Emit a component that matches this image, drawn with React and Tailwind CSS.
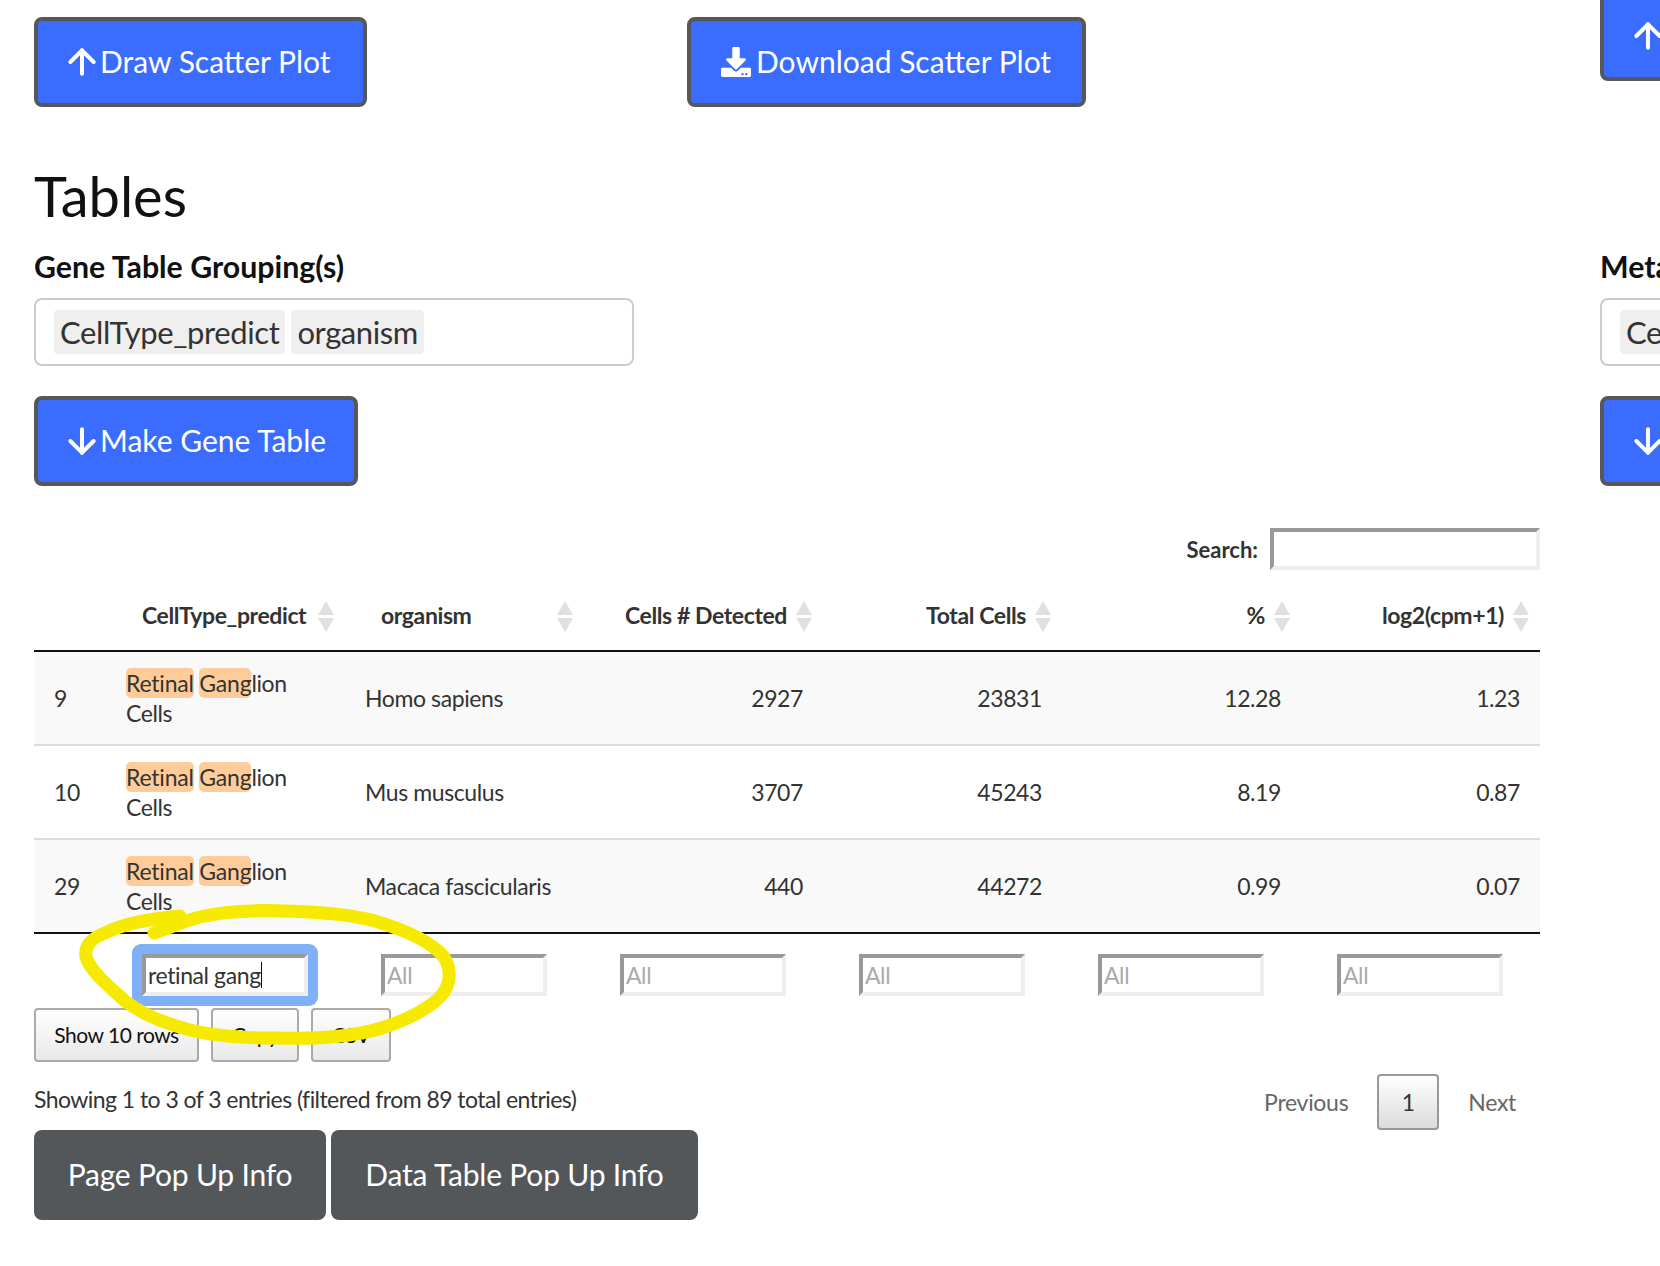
import React from "react";
import { FaDownload } from "react-icons/fa";
import { ArrowUp, ArrowDown } from "lucide-react";

const font = "font-['Lato','Liberation_Sans',sans-serif]";

function BlueBtn({ icon, children, className = "" }) {
  return (
    <button className={`flex items-center h-[90px] pl-[30px] pr-[30px] bg-[#3a6cff] border-4 border-[#555759] rounded-[8px] text-white text-[30px] leading-none whitespace-nowrap shrink-0 ${className}`}>
      {icon}
      <span className="ml-[4px] -mt-[2px]">{children}</span>
    </button>
  );
}

const Up = <ArrowUp size={40} strokeWidth={2.4} className="-mx-[6px] shrink-0" />;
const Down = <ArrowDown size={40} strokeWidth={2.4} className="-mx-[6px] shrink-0" />;

function Chip({ children }) {
  return <span className="h-[44px] px-[6px] flex items-center bg-[#efefef] rounded-[4px] text-[31px] tracking-[-0.4px] text-[#333]">{children}</span>;
}

function SelectBox({ chips, className = "" }) {
  return (
    <div className={`h-[68px] border-2 border-[#ccc] rounded-[8px] flex items-center gap-[6px] pl-[18px] ${className}`}>
      {chips.map((c) => <Chip key={c}>{c}</Chip>)}
    </div>
  );
}

function Sort() {
  return (
    <svg width="18" height="32" viewBox="0 0 18 32" className="absolute right-[10px] top-[31px]">
      <path d="M9 0 L17 14 H1 Z M1 17 H17 L9 31 Z" fill="#e0e0e0" />
    </svg>
  );
}

function Inset({ children, className = "" }) {
  return (
    <div className={`h-[42px] w-[166px] border-4 border-t-[#999] border-l-[#999] border-b-[#eee] border-r-[#eee] bg-white flex items-center text-[23px] leading-none pl-[1px] ${className}`}>
      {children}
    </div>
  );
}

const Mark = ({ children }) => <mark className="bg-[#ffcc99] text-[#333] rounded-[5px] py-[1px] tracking-[-0.2px]">{children}</mark>;

const rows = [
  ["9", "Homo sapiens", "2927", "23831", "12.28", "1.23", "bg-[#f9f9f9]"],
  ["10", "Mus musculus", "3707", "45243", "8.19", "0.87", "bg-white"],
  ["29", "Macaca fascicularis", "440", "44272", "0.99", "0.07", "bg-[#f9f9f9]"],
];

const heads = ["Cells # Detected", "Total Cells", "%", "log2(cpm+1)"];

function Table() {
  return (
    <table className="w-[1506px] table-fixed border-collapse text-[23px] tracking-[-0.4px] text-[#333]">
      <colgroup>
        <col className="w-[72px]" />
        <col className="w-[239px]" />
        <col className="w-[239px]" />
        <col className="w-[239px]" />
        <col className="w-[239px]" />
        <col className="w-[239px]" />
        <col className="w-[239px]" />
      </colgroup>
      <thead>
        <tr className="h-[81px] border-b-2 border-[#111]">
          <th />
          <th className="relative text-left pl-[36px] pt-[10px] font-bold whitespace-nowrap"><span>CellType_predict</span><Sort /></th>
          <th className="relative text-left pl-[36px] pt-[10px] font-bold"><span>organism</span><Sort /></th>
          {heads.map((h) => (
            <th key={h} className="relative text-right pr-[36px] pt-[10px] font-bold whitespace-nowrap"><span>{h}</span><Sort /></th>
          ))}
        </tr>
      </thead>
      <tbody>
        {rows.map((r, i) => (
          <tr key={r[0]} className={`h-[94px] ${r[6]} ${i < 2 ? "border-b-2 border-[#ddd]" : "border-b-2 border-[#111]"}`}>
            <td className="pl-[20px]">{r[0]}</td>
            <td className="pl-[20px] leading-[30px]"><Mark>Retinal</Mark> <Mark>Gang</Mark>lion<br />Cells</td>
            <td className="pl-[20px]">{r[1]}</td>
            <td className="pr-[20px] text-right">{r[2]}</td>
            <td className="pr-[20px] text-right">{r[3]}</td>
            <td className="pr-[20px] text-right">{r[4]}</td>
            <td className="pr-[20px] text-right">{r[5]}</td>
          </tr>
        ))}
        <tr className="h-[74px]">
          <td />
          <td className="pl-[36px] pt-[20px] pb-[12px] align-top">
            <div className="w-[186px] -m-[10px] p-[10px] bg-[#7fb0f8] rounded-[9px]">
              <Inset className="text-[#333]">
                <span className="pl-[1px]">retinal gang</span><span className="inline-block w-[1px] h-[26px] bg-[#111]" />
              </Inset>
            </div>
          </td>
          {[0, 1, 2, 3, 4].map((k) => (
            <td key={k} className="pl-[36px] pt-[20px] pb-[12px] align-top"><Inset className="text-[#aaa]"><span className="pl-[1px]">All</span></Inset></td>
          ))}
        </tr>
      </tbody>
    </table>
  );
}

function GrayBtn({ children, className = "" }) {
  return (
    <button className={`h-[54px] border-2 border-[#aaa] rounded-[4px] bg-linear-to-b from-white to-[#e9e9e9] text-[21px] tracking-[-0.5px] text-[#111] flex items-center justify-center ${className}`}>
      {children}
    </button>
  );
}

function Scribble() {
  return (
    <svg width="1660" height="1266" viewBox="0 0 1660 1266" fill="none" className="absolute left-0 top-0 pointer-events-none">
      <path
        d="M154 933 C168 929 183 921 200 917 C225 911 260 910 285 911 C320 912 350 914 375 921 C405 930 432 942 444 957 C452 970 451 985 440 997 C427 1010 405 1020 385 1027 C355 1037 310 1039 275 1038 C240 1038 210 1035 190 1030 C160 1022 140 1013 125 1001 C105 983 90 970 86 957 C84 945 92 938 105 933 C125 923 150 919 180 916"
        stroke="#f5ea00" strokeWidth="13" strokeLinecap="round" strokeLinejoin="round"
      />
    </svg>
  );
}

export default function App() {
  return (
    <div className={`relative w-[1660px] h-[1266px] overflow-hidden bg-white ${font}`}>
      <div className="absolute left-[1600px] top-[-9px]">
        <BlueBtn icon={Up}>Draw Scatter Plot</BlueBtn>
      </div>
      <div className="w-[1566px] pl-[34px] pt-[17px]">
        <div className="flex">
          <div className="w-[653px]"><BlueBtn icon={Up} className="w-[333px]">Draw Scatter Plot</BlueBtn></div>
          <BlueBtn icon={<FaDownload size={30} className="mr-[1px] shrink-0" />} className="w-[399px]">Download Scatter Plot</BlueBtn>
        </div>
        <h2 className="text-[56px] leading-none font-normal text-[#111] mt-[61px]">Tables</h2>
        <div className="flex">
          <div className="w-[1566px] shrink-0">
            <div className="text-[30.3px] font-bold text-[#111] leading-[36px] mt-[24px]">Gene Table Grouping(s)</div>
            <SelectBox chips={["CellType_predict", "organism"]} className="w-[600px] mt-[14px]" />
            <BlueBtn icon={Down} className="w-[324px] mt-[30px]">Make Gene Table</BlueBtn>
            <div className="w-[1506px] flex justify-end items-center h-[84px] mt-[42px] pb-[42px] text-[22px] font-bold text-[#333]">
              <span className="mr-[12px]">Search:</span>
              <div className="w-[270px] h-[42px] border-4 border-t-[#999] border-l-[#999] border-b-[#eee] border-r-[#eee]" />
            </div>
            <div className="-mt-[42px]"><Table /></div>
            <div className="flex gap-[12px]">
              <GrayBtn className="w-[165px]">Show 10 rows</GrayBtn>
              <GrayBtn className="w-[88px]">Copy</GrayBtn>
              <GrayBtn className="w-[80px]">CSV</GrayBtn>
            </div>
            <div className="w-[1506px] flex justify-between items-start mt-[12px]">
              <div className="text-[23px] tracking-[-0.55px] text-[#333] leading-[28px] mt-[11px]">Showing 1 to 3 of 3 entries (filtered from 89 total entries)</div>
              <div className="flex items-center text-[23px] tracking-[-0.3px] text-[#666] pr-[24px]">
                <span className="mr-[29px]">Previous</span>
                <span className="w-[62px] h-[56px] border-2 border-[#999] rounded-[4px] bg-linear-to-b from-white to-[#dcdcdc] text-[#333] flex items-center justify-center">1</span>
                <span className="ml-[29px]">Next</span>
              </div>
            </div>
            <div className="flex gap-[5px]">
              <button className="h-[90px] w-[292px] bg-[#53575a] rounded-[8px] text-white text-[30px] tracking-[-0.2px] pb-[2px]">Page Pop Up Info</button>
              <button className="h-[90px] w-[367px] bg-[#53575a] rounded-[8px] text-white text-[30px] tracking-[-0.2px] pb-[2px]">Data Table Pop Up Info</button>
            </div>
          </div>
          <div className="w-[400px] shrink-0">
            <div className="text-[30.3px] font-bold text-[#111] leading-[36px] mt-[24px] whitespace-nowrap">Meta Table Grouping(s)</div>
            <SelectBox chips={["CellType_predict"]} className="w-[600px] mt-[14px] pl-[14px]" />
            <BlueBtn icon={Down} className="w-[324px] mt-[30px]">Make Meta Table</BlueBtn>
          </div>
        </div>
      </div>
      <Scribble />
    </div>
  );
}
